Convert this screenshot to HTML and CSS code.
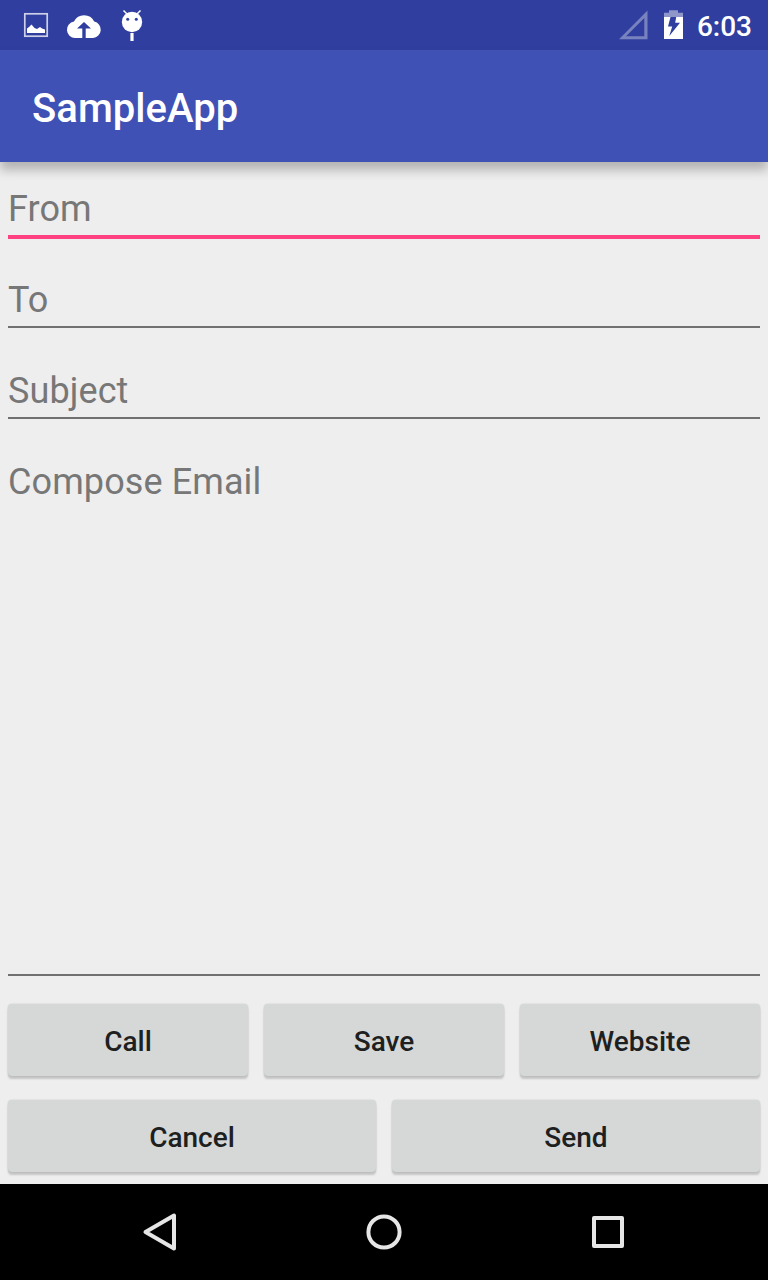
FILE: index.html
```html
<!DOCTYPE html>
<html lang="en">
<head>
<meta charset="utf-8">
<title>SampleApp</title>
<link rel="stylesheet" href="styles.css">
</head>
<body>
<div class="screen">
  <header class="status">
    <svg class="notifications" width="160" height="50" viewBox="0 0 160 50" aria-hidden="true">
      <rect x="24.800" y="13.800" width="22.400" height="22.400" fill="none" stroke="#cdd0e8" stroke-width="1.700"/>
      <path fill="#fff" d="M27 33V28.500L29 27l2.500-2.500L34.500 28l2.500 1 3-2 2 1.500 3 1V33z"/>
      <path fill="#fff" fill-rule="evenodd" d="M75 38a8.300 8.300 0 0 1-1-16.500A11.300 11.300 0 0 1 94.200 21.600 8.300 8.300 0 0 1 93 38zM82.300 38h3.400v-9.500h5.300l-7-6.500-7 6.500h5.300z"/>
      <path stroke="#fff" stroke-width="1.500" d="m123.500 10.500 4 4m13-4-4 4"/>
      <circle cx="132" cy="22" r="10.200" fill="#fff"/>
      <circle cx="127.700" cy="19.300" r="1.500" fill="#303f9f"/>
      <circle cx="136.300" cy="19.300" r="1.500" fill="#303f9f"/>
      <path fill="#fff" d="M130.400 33h3.200v8h-3.200z"/>
    </svg>
    <div class="system">
      <svg width="80" height="50" viewBox="612 0 80 50" aria-hidden="true">
        <path fill="#7882bf" fill-rule="evenodd" d="M619 39.300 647.500 10.500v28.800zM626 36.300h18.300v-18.300z"/>
        <path fill="#8f97ca" d="M664 17v-4.200h5v-2.600h9v2.600h5V17z"/>
        <path fill="#fff" d="M664 17h19v22h-19z"/>
        <path fill="#303f9f" d="M670.500 17 668 26.500h4.200L669.300 36 680 22.800h-4.800l1-5.800z"/>
      </svg>
      <span class="clock">6:03</span>
    </div>
  </header>
  <div class="appbar"><h1 class="title">SampleApp</h1></div>
  <main class="form">
    <div class="field field-active">From</div>
    <div class="field field-to">To</div>
    <div class="field">Subject</div>
    <div class="field field-body">Compose Email</div>
    <div class="actions">
      <button class="button">Call</button>
      <button class="button">Save</button>
      <button class="button">Website</button>
    </div>
    <div class="actions">
      <button class="button">Cancel</button>
      <button class="button">Send</button>
    </div>
  </main>
  <nav class="navbar">
    <svg width="768" height="96" viewBox="0 1184 768 96" fill="none" stroke="#e6e6e6" stroke-width="4" stroke-linejoin="round" aria-hidden="true">
      <path d="M145.500 1232 174 1215.500v33z"/>
      <circle cx="384" cy="1232" r="15.600"/>
      <rect x="594" y="1218" width="28" height="28"/>
    </svg>
  </nav>
</div>
</body>
</html>
```
FILE: styles.css
```css
* {
  box-sizing: border-box;
}

body {
  margin: 0;
  font-family: Roboto, sans-serif;
  background: #eee;
}

svg {
  display: block;
}

.screen {
  display: flex;
  flex-direction: column;
  width: 768px;
  height: 1280px;
}

.status {
  display: flex;
  justify-content: space-between;
  height: 50px;
  background: #303f9f;
}

.system {
  display: flex;
  padding-right: 16px;
}

.clock {
  margin-left: 5px;
  color: #fff;
  font-size: 28px;
  font-weight: 500;
  line-height: 53px;
}

.appbar {
  display: flex;
  align-items: center;
  height: 112px;
  padding: 4px 32px 0;
  background: #3f51b5;
  box-shadow: 0 8px 10px rgba(0, 0, 0, 0.25);
}

.title {
  margin: 0;
  color: #fff;
  font-size: 40px;
  font-weight: 500;
  letter-spacing: 0.06px;
}

.form {
  display: flex;
  flex-direction: column;
  height: 1022px;
  padding: 0 8px;
}

.field {
  flex: none;
  height: 91px;
  padding-top: 42px;
  border-bottom: 2px solid #707070;
  color: #777;
  font-size: 36px;
  line-height: 42px;
  letter-spacing: 0.1px;
}

.field-active {
  height: 77px;
  padding-top: 26px;
  border-bottom: 4px solid #ff4081;
}

.field-to {
  height: 89px;
  padding-top: 40px;
}

.field-body {
  height: 557px;
  margin-bottom: 28px;
}

.actions {
  display: flex;
  flex: none;
  gap: 16px;
  margin-bottom: 24px;
}

.actions:last-child {
  margin-bottom: 12px;
}

.button {
  flex: 1;
  height: 72px;
  padding: 2px 0 0;
  border: 0;
  border-radius: 4px;
  background: #d6d8d7;
  box-shadow: 0 3px 2px rgba(0, 0, 0, 0.17), 0 0 2px rgba(0, 0, 0, 0.16);
  color: #1e1f1f;
  font: 500 28px Roboto, sans-serif;
}

.navbar {
  height: 96px;
  background: #000;
}
```
